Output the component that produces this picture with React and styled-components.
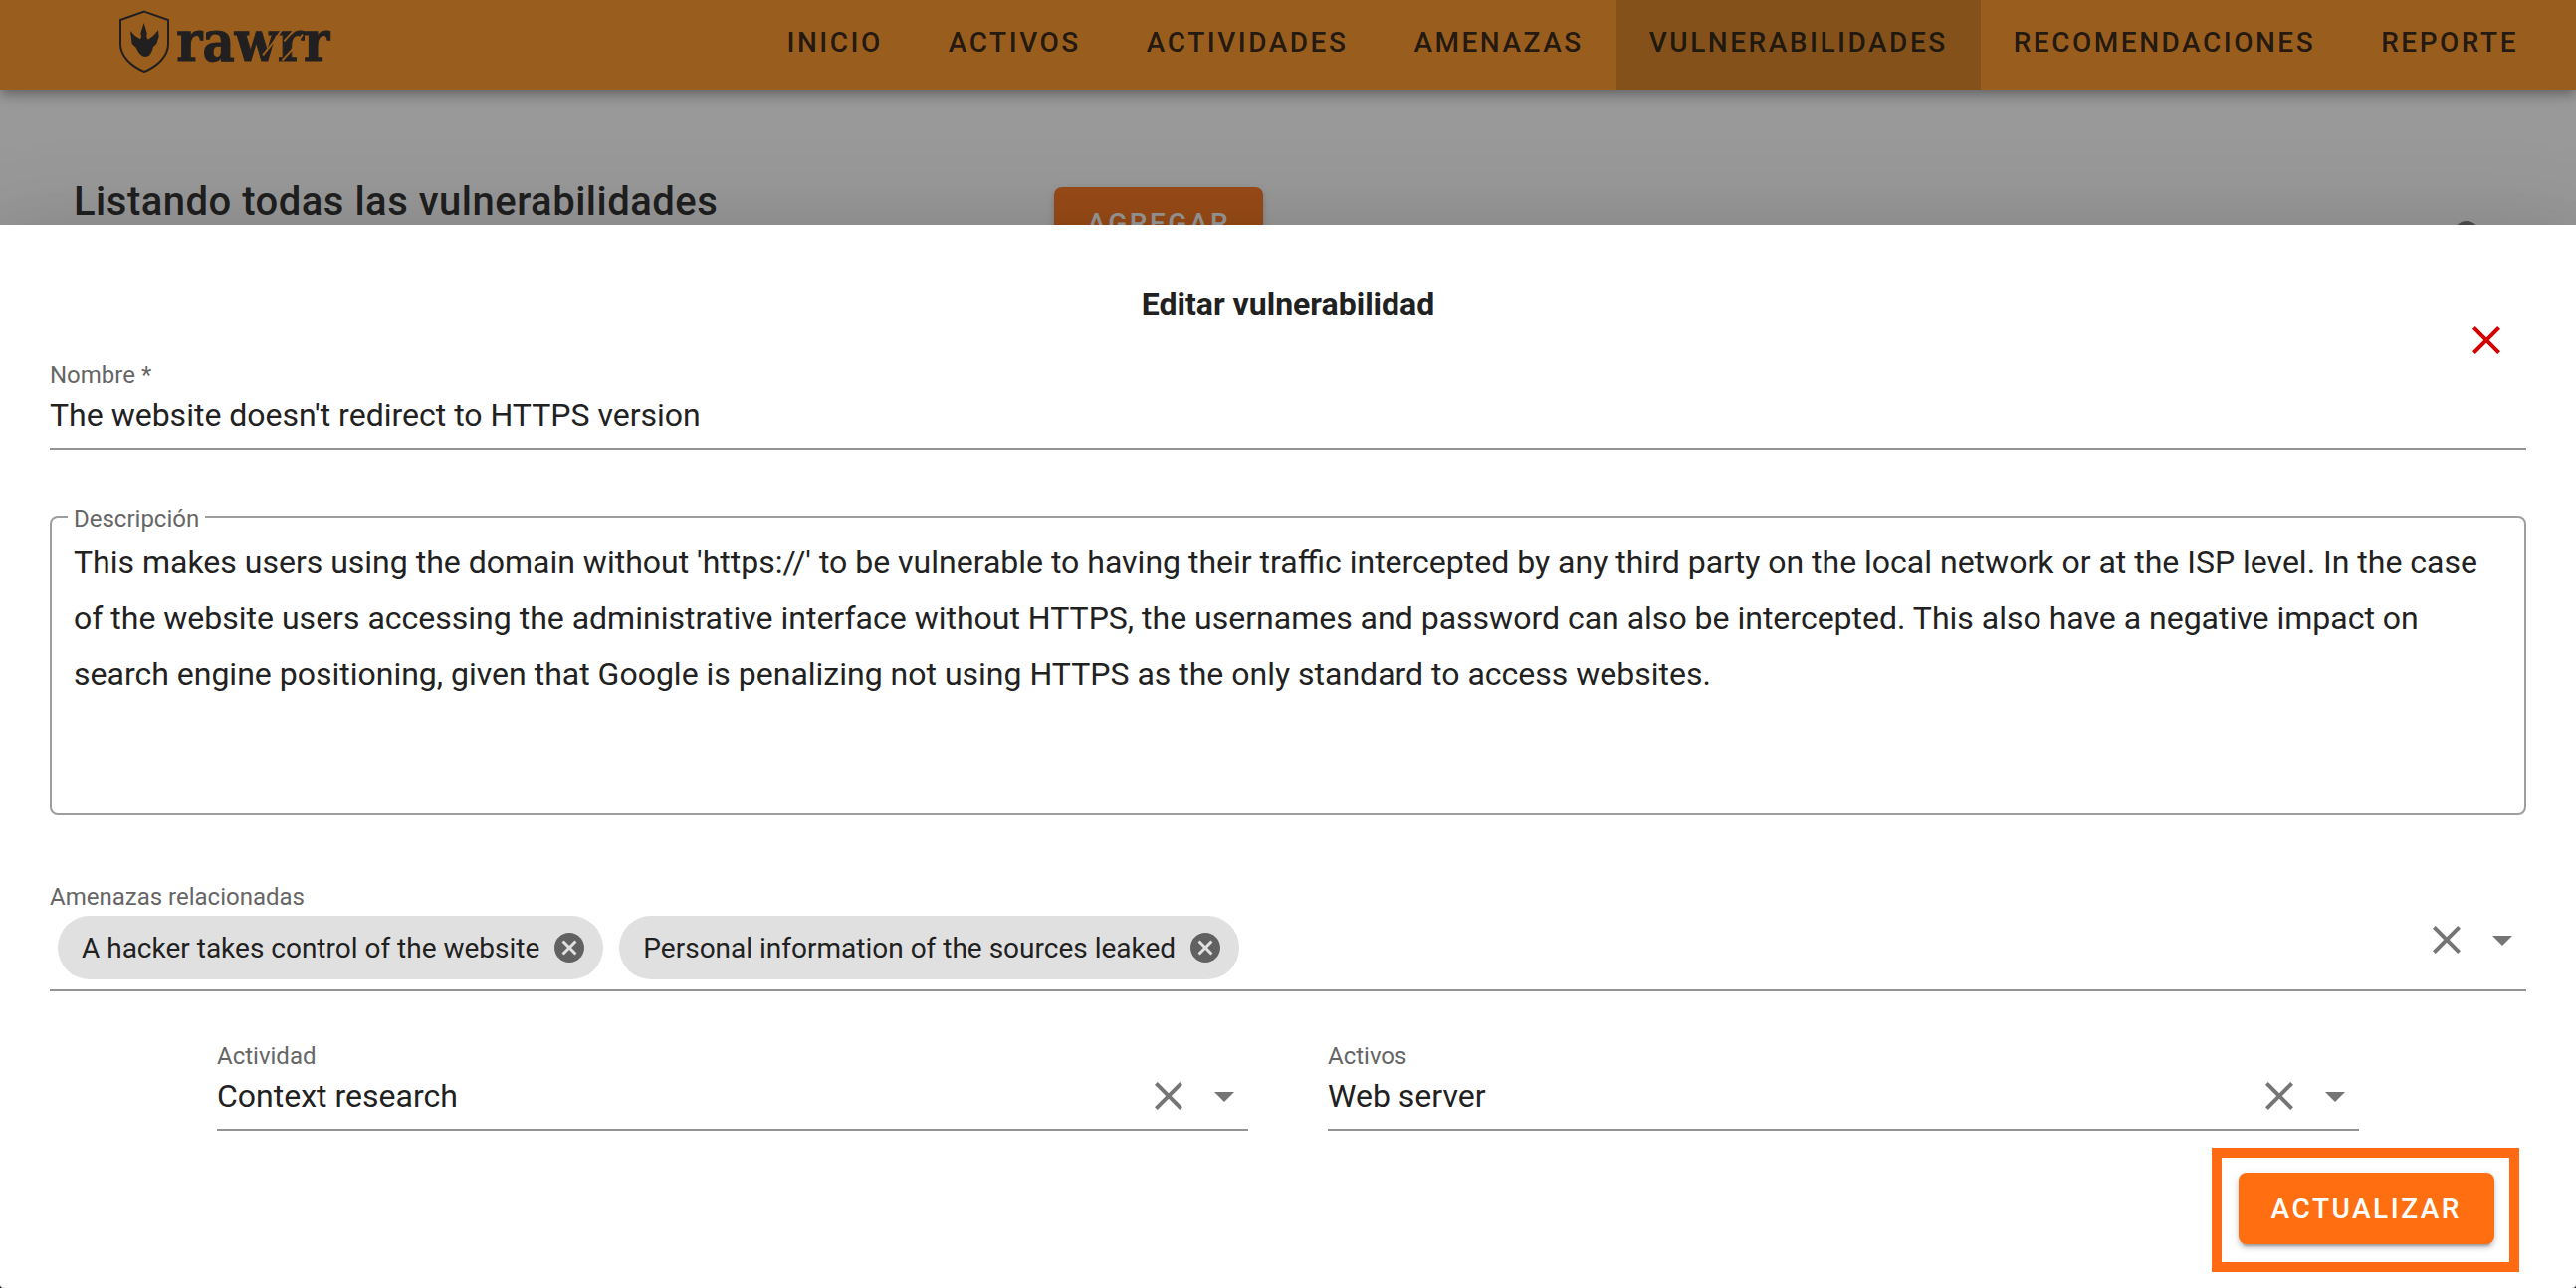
import React, { useState } from "react";
import styled, { createGlobalStyle } from "styled-components";

const GlobalStyle = createGlobalStyle`
  *, *::before, *::after { box-sizing: border-box; }
  html { background: #111; }
  body {
    margin: 0;
    font-family: Roboto, "Noto Sans", sans-serif;
    color: #212121;
    -webkit-font-smoothing: antialiased;
  }
  button, input, textarea, select { font-family: inherit; color: inherit; }
`;

const Shell = styled.div`
  position: relative;
  min-height: 100vh;
  overflow: hidden;
  background: #fff;
  border-radius: 0 0 4px 4px;
`;

const AppBar = styled.header`
  position: relative;
  display: flex;
  justify-content: space-between;
  height: 90px;
  padding: 0 25px 0 119px;
  background: #ff911a;
  box-shadow: 0 4px 8px -2px rgba(0, 0, 0, 0.2), 0 8px 10px rgba(0, 0, 0, 0.14),
    0 2px 20px rgba(0, 0, 0, 0.12);
`;

const Brand = styled.a`
  display: block;
  padding-top: 10px;
  color: #231f20;
`;

const Nav = styled.nav`
  display: flex;
`;

const NavLink = styled.a`
  display: flex;
  align-items: center;
  padding: 0 33px 6px;
  background: ${(p) => (p.$active ? "rgba(0, 0, 0, 0.15)" : "transparent")};
  color: rgba(0, 0, 0, 0.87);
  font-size: 28px;
  font-weight: 500;
  letter-spacing: 0.09em;
  text-decoration: none;
  text-transform: uppercase;
`;

const Main = styled.main`
  display: grid;
  grid-template-columns: 40.5% 1fr auto;
  align-items: start;
  padding: 89px 81px 0 74px;
`;

const PageTitle = styled.h1`
  margin: 0;
  font-size: 40px;
  line-height: 48px;
  font-weight: 500;
  letter-spacing: 0.0125em;
`;

const RaisedButton = styled.button`
  justify-self: start;
  height: 72px;
  padding: 0 33px;
  border: 0;
  border-radius: 8px;
  background: #ff6f12;
  color: #fff;
  font-size: 28px;
  font-weight: 500;
  letter-spacing: 0.09em;
  text-transform: uppercase;
  box-shadow: 0 6px 2px -4px rgba(0, 0, 0, 0.2), 0 4px 4px rgba(0, 0, 0, 0.14),
    0 2px 10px rgba(0, 0, 0, 0.12);
  cursor: pointer;
`;

const AddButton = styled(RaisedButton)`
  margin-top: 9px;
`;

const IconButton = styled.button`
  display: block;
  flex: none;
  width: ${(p) => p.$size || 48}px;
  height: ${(p) => p.$size || 48}px;
  padding: 0;
  border: 0;
  background: none;
  color: ${(p) => p.$color || "#757575"};
  cursor: pointer;

  svg { display: block; width: 100%; height: 100%; fill: currentColor; }
`;

const SearchButton = styled(IconButton)`
  margin-top: 37px;
`;

const Scrim = styled.div`
  position: absolute;
  inset: 0;
  display: flex;
  flex-direction: column;
  justify-content: flex-end;
  background: rgba(32, 32, 32, 0.46);
`;

const Dialog = styled.section`
  position: relative;
  padding: 60px 50px 16px;
  background: #fff;
  box-shadow: 0 22px 30px -14px rgba(0, 0, 0, 0.2), 0 48px 76px 6px rgba(0, 0, 0, 0.14),
    0 18px 92px 16px rgba(0, 0, 0, 0.12);
`;

const DialogTitle = styled.h2`
  margin: 0 0 38px;
  font-size: 32px;
  line-height: 38px;
  font-weight: 700;
  text-align: center;
`;

const CloseButton = styled(IconButton)`
  position: absolute;
  top: 92px;
  right: 66px;
`;

const Form = styled.form`
  display: flex;
  flex-direction: column;
`;

const Field = styled.div`
  display: flex;
  flex-direction: column;
  gap: 4px;
  min-width: 0;
  padding-bottom: ${(p) => (p.$chips ? 10 : 12)}px;
  border-bottom: 2px solid #949494;
`;

const Label = styled.label`
  color: #666;
  font-size: 24px;
  line-height: 30px;
`;

const valueText = `
  flex: 1;
  min-width: 0;
  padding: 0;
  border: 0;
  outline: 0;
  background: transparent;
  font-size: 32px;
`;

const FieldRow = styled.div`
  display: flex;
  align-items: center;
  gap: 8px;
  height: 42px;
`;

const TextInput = styled.input`
  ${valueText}
  height: 42px;
`;

const SelectInput = styled.select`
  ${valueText}
  appearance: none;
  height: 42px;
`;

const Outline = styled.fieldset`
  margin: 51px 0 67px;
  padding: 0 16px;
  min-width: 0;
  border: 2px solid #9e9e9e;
  border-radius: 8px;
`;

const OutlineLegend = styled.legend`
  padding: 4px 6px 0;
  line-height: 28px;

  label { display: block; line-height: 28px; }
`;

const TextArea = styled.textarea`
  ${valueText}
  display: block;
  width: 100%;
  padding: 2px 6px 0;
  line-height: 56px;
  resize: none;
  overflow: hidden;
`;

const ChipRow = styled.div`
  display: flex;
  align-items: flex-start;
  gap: 8px;
`;

const Chips = styled.div`
  display: flex;
  flex: 1;
  flex-wrap: wrap;
  gap: 16px;
  min-width: 0;
  padding-left: 8px;
`;

const Chip = styled.span`
  display: flex;
  align-items: center;
  gap: 12px;
  height: 64px;
  padding: 0 16px 0 24px;
  border-radius: 32px;
  background: #e0e0e0;
  font-size: 28px;
`;

const ChipInput = styled.input`
  ${valueText}
  height: 64px;
`;

const Columns = styled.div`
  display: grid;
  grid-template-columns: 1fr 1fr;
  gap: 80px;
  padding: 50px 168px 0;
`;

const Highlight = styled.div`
  align-self: flex-end;
  display: flex;
  margin: 17px 7px 0 0;
  padding: 15px 15px 18px 17px;
  border: 10px solid #ff6a12;
`;

const Icon = ({ d }) => (
  <svg viewBox="0 0 24 24" aria-hidden="true">
    <path d={d} />
  </svg>
);

const icons = {
  close:
    "M19 6.41L17.59 5 12 10.59 6.41 5 5 6.41 10.59 12 5 17.59 6.41 19 12 13.41 17.59 19 19 17.59 13.41 12z",
  arrow: "M7 10l5 5 5-5z",
  cancel:
    "M12 2C6.47 2 2 6.47 2 12s4.47 10 10 10 10-4.47 10-10S17.53 2 12 2zm5 13.59L15.59 17 12 13.41 8.41 17 7 15.59 10.59 12 7 8.41 8.41 7 12 10.59 15.59 7 17 8.41 13.41 12 17 15.59z",
  search:
    "M15.5 14h-.79l-.28-.27A6.47 6.47 0 0 0 16 9.5 6.5 6.5 0 1 0 9.5 16c1.61 0 3.09-.59 4.23-1.57l.27.28v.79l5 4.99L20.49 19l-4.99-5zm-6 0C7.01 14 5 11.99 5 9.5S7.01 5 9.5 5 14 7.01 14 9.5 11.99 14 9.5 14z",
};

const Logo = () => (
  <svg width="215" height="65" viewBox="57 30 645 195" role="img" aria-label="rawrr">
    <path
      d="M135 35 L207 60 V133 C207 170 174 200 135 216 C96 200 63 170 63 133 V60 Z"
      fill="none"
      stroke="currentColor"
      strokeWidth="6"
    />
    <path
      d="M93 93 L108 109 L123 118 L126 111 L124 100 L134 69 L143 100 L142 111 L146 119 L162 108 L177 91 L179 110 L172 132 L162 141 Q156 171 137 171 Q121 169 110 143 L98 132 Z"
      fill="currentColor"
    />
    <text
      x="232"
      y="183"
      fontFamily="'DejaVu Serif Condensed', 'DejaVu Serif', serif"
      fontStretch="condensed"
      fontWeight="700"
      fontSize="166"
      fill="currentColor"
      stroke="currentColor"
      strokeWidth="3"
    >
      rawrr
    </text>
    <path
      d="M556 80 L520 132 L492 166 M594 82 L556 124 M612 104 L578 152 L550 182"
      fill="none"
      stroke="#ff911a"
      strokeWidth="6"
    />
  </svg>
);

const sections = [
  "Inicio",
  "Activos",
  "Actividades",
  "Amenazas",
  "Vulnerabilidades",
  "Recomendaciones",
  "Reporte",
];

const description =
  "This makes users using the domain without 'https://' to be vulnerable to having their traffic intercepted by any third party on the local network or at the ISP level. In the case of the website users accessing the administrative interface without HTTPS, the usernames and password can also be intercepted. This also have a negative impact on search engine positioning, given that Google is penalizing not using HTTPS as the only standard to access websites.";

function SelectField({ id, label, options }) {
  const [value, setValue] = useState(options[0]);
  return (
    <Field>
      <Label htmlFor={id}>{label}</Label>
      <FieldRow>
        <SelectInput id={id} value={value} onChange={(e) => setValue(e.target.value)}>
          <option value="" />
          {options.map((o) => (
            <option key={o}>{o}</option>
          ))}
        </SelectInput>
        <IconButton type="button" aria-label={`Borrar ${label}`} onClick={() => setValue("")}>
          <Icon d={icons.close} />
        </IconButton>
        <IconButton type="button" aria-label={`Abrir ${label}`}>
          <Icon d={icons.arrow} />
        </IconButton>
      </FieldRow>
    </Field>
  );
}

export default function App() {
  const [threats, setThreats] = useState([
    "A hacker takes control of the website",
    "Personal information of the sources leaked",
  ]);

  return (
    <>
      <GlobalStyle />
      <Shell>
        <AppBar>
          <Brand href="#inicio">
            <Logo />
          </Brand>
          <Nav>
            {sections.map((s) => (
              <NavLink key={s} href={`#${s.toLowerCase()}`} $active={s === "Vulnerabilidades"}>
                {s}
              </NavLink>
            ))}
          </Nav>
        </AppBar>
        <Main>
          <PageTitle>Listando todas las vulnerabilidades</PageTitle>
          <AddButton type="button">Agregar</AddButton>
          <SearchButton type="button" aria-label="Buscar">
            <Icon d={icons.search} />
          </SearchButton>
        </Main>
        <Scrim>
          <Dialog role="dialog" aria-modal="true" aria-labelledby="dialog-title">
            <DialogTitle id="dialog-title">Editar vulnerabilidad</DialogTitle>
            <CloseButton type="button" aria-label="Cerrar" $color="#d50000">
              <Icon d={icons.close} />
            </CloseButton>
            <Form onSubmit={(e) => e.preventDefault()}>
              <Field>
                <Label htmlFor="nombre">Nombre *</Label>
                <FieldRow>
                  <TextInput
                    id="nombre"
                    required
                    defaultValue="The website doesn't redirect to HTTPS version"
                  />
                </FieldRow>
              </Field>
              <Outline>
                <OutlineLegend>
                  <Label htmlFor="descripcion">Descripción</Label>
                </OutlineLegend>
                <TextArea id="descripcion" rows={5} spellCheck={false} defaultValue={description} />
              </Outline>
              <Field $chips>
                <Label htmlFor="amenazas">Amenazas relacionadas</Label>
                <ChipRow>
                  <Chips>
                    {threats.map((t) => (
                      <Chip key={t}>
                        {t}
                        <IconButton
                          type="button"
                          $size={36}
                          $color="#616161"
                          aria-label={`Quitar ${t}`}
                          onClick={() => setThreats(threats.filter((x) => x !== t))}
                        >
                          <Icon d={icons.cancel} />
                        </IconButton>
                      </Chip>
                    ))}
                    <ChipInput id="amenazas" />
                  </Chips>
                  <IconButton type="button" aria-label="Borrar amenazas" onClick={() => setThreats([])}>
                    <Icon d={icons.close} />
                  </IconButton>
                  <IconButton type="button" aria-label="Abrir amenazas">
                    <Icon d={icons.arrow} />
                  </IconButton>
                </ChipRow>
              </Field>
              <Columns>
                <SelectField id="actividad" label="Actividad" options={["Context research"]} />
                <SelectField id="activos" label="Activos" options={["Web server"]} />
              </Columns>
              <Highlight>
                <RaisedButton type="submit">Actualizar</RaisedButton>
              </Highlight>
            </Form>
          </Dialog>
        </Scrim>
      </Shell>
    </>
  );
}
